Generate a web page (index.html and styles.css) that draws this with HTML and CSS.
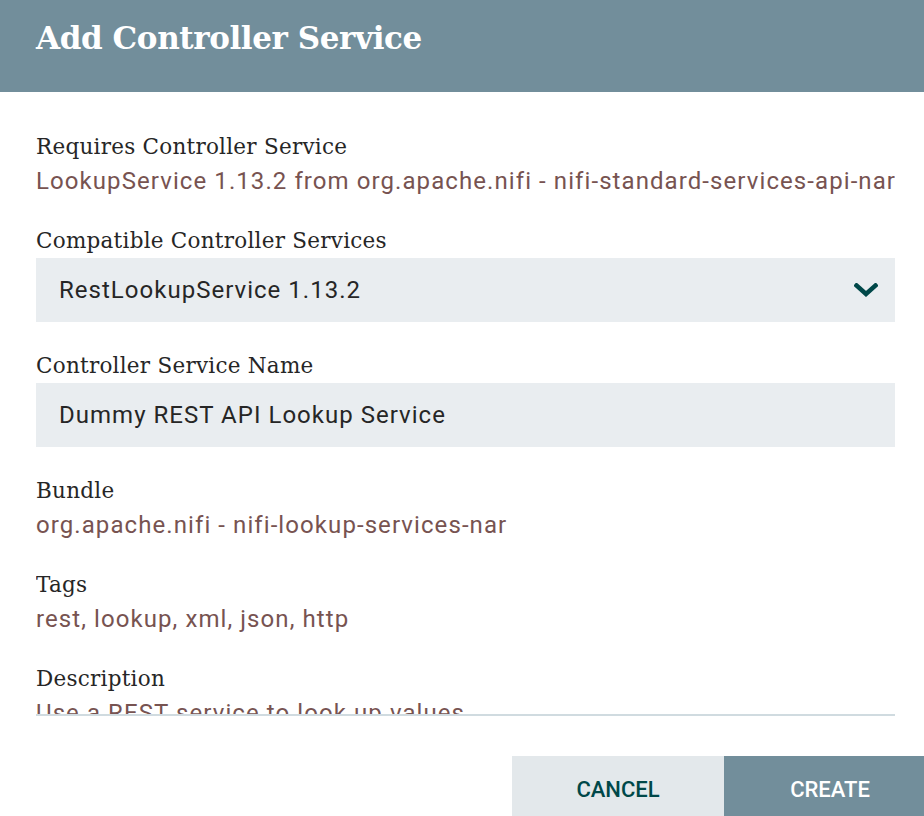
FILE: index.html
```html
<!DOCTYPE html>
<html>
<head>
<meta charset="utf-8">
<link rel="stylesheet" href="styles.css">
</head>
<body>
<div class="dialog">
  <div class="header"><span class="title">Add Controller Service</span></div>
  <div class="content">
    <div class="scroll">
      <div class="field">
        <div class="label">Requires Controller Service</div>
        <div class="value">LookupService 1.13.2 from org.apache.nifi - nifi-standard-services-api-nar</div>
      </div>
      <div class="field">
        <div class="label">Compatible Controller Services</div>
        <div class="box select">
          <span class="box-text">RestLookupService 1.13.2</span>
          <svg class="chevron" width="24" height="14" viewBox="0 0 24 14"><polyline points="2.5,2.5 12,11 21.5,2.5" fill="none" stroke="#004849" stroke-width="4.5" stroke-linecap="square" stroke-linejoin="miter"/></svg>
        </div>
      </div>
      <div class="field">
        <div class="label">Controller Service Name</div>
        <div class="box"><span class="box-text">Dummy REST API Lookup Service</span></div>
      </div>
      <div class="field">
        <div class="label">Bundle</div>
        <div class="value">org.apache.nifi - nifi-lookup-services-nar</div>
      </div>
      <div class="field">
        <div class="label">Tags</div>
        <div class="value">rest, lookup, xml, json, http</div>
      </div>
      <div class="field">
        <div class="label">Description</div>
        <div class="value">Use a REST service to look up values.</div>
      </div>
    </div>
  </div>
  <div class="footer">
    <button class="btn cancel">CANCEL</button>
    <button class="btn create">CREATE</button>
  </div>
</div>
</body>
</html>
```
FILE: styles.css
```css
html, body {
  margin: 0;
  padding: 0;
  background: #ffffff;
  overflow: hidden;
}
.dialog {
  width: 924px;
  height: 816px;
  display: flex;
  flex-direction: column;
  overflow: hidden;
}
.header {
  height: 92px;
  flex-shrink: 0;
  background: #728e9b;
  display: flex;
  align-items: center;
  padding-left: 36px;
  box-sizing: border-box;
}
.title {
  font-family: "DejaVu Serif", serif;
  font-weight: bold;
  font-size: 31px;
  letter-spacing: -0.4px;
  color: #ffffff;
  margin-top: -16px;
}
.content {
  padding: 37px 29px 0 36px;
}
.scroll {
  height: 585px;
  overflow: hidden;
  border-bottom: 2px solid #d0dbe0;
  display: flex;
  flex-direction: column;
  gap: 24px;
}
.field {
  display: flex;
  flex-direction: column;
}
.label {
  font-family: "DejaVu Serif", serif;
  font-size: 21.5px;
  letter-spacing: 0.25px;
  line-height: 35px;
  color: #262626;
  height: 35px;
}
.value {
  font-family: Roboto, sans-serif;
  font-size: 24px;
  letter-spacing: 1.08px;
  line-height: 35px;
  height: 35px;
  color: #775351;
  white-space: nowrap;
}
.box {
  height: 64px;
  background: #e9edf0;
  display: flex;
  align-items: center;
  padding: 0 17px 0 23px;
  box-sizing: border-box;
  margin-bottom: 2px;
}
.box-text {
  font-family: Roboto, sans-serif;
  font-size: 24px;
  letter-spacing: 1.02px;
  color: #262626;
  flex: 1;
}
.chevron {
  display: block;
}
.footer {
  margin-top: 40px;
  margin-right: -12px;
  display: flex;
  justify-content: flex-end;
  flex-shrink: 0;
}
.btn {
  height: 67px;
  border: none;
  font-family: Roboto, sans-serif;
  font-weight: 500;
  font-size: 22px;
  padding: 0;
  cursor: pointer;
}
.cancel {
  width: 212px;
  background: #e3e8eb;
  color: #004849;
}
.create {
  width: 212px;
  background: #728e9b;
  color: #ffffff;
}
```
